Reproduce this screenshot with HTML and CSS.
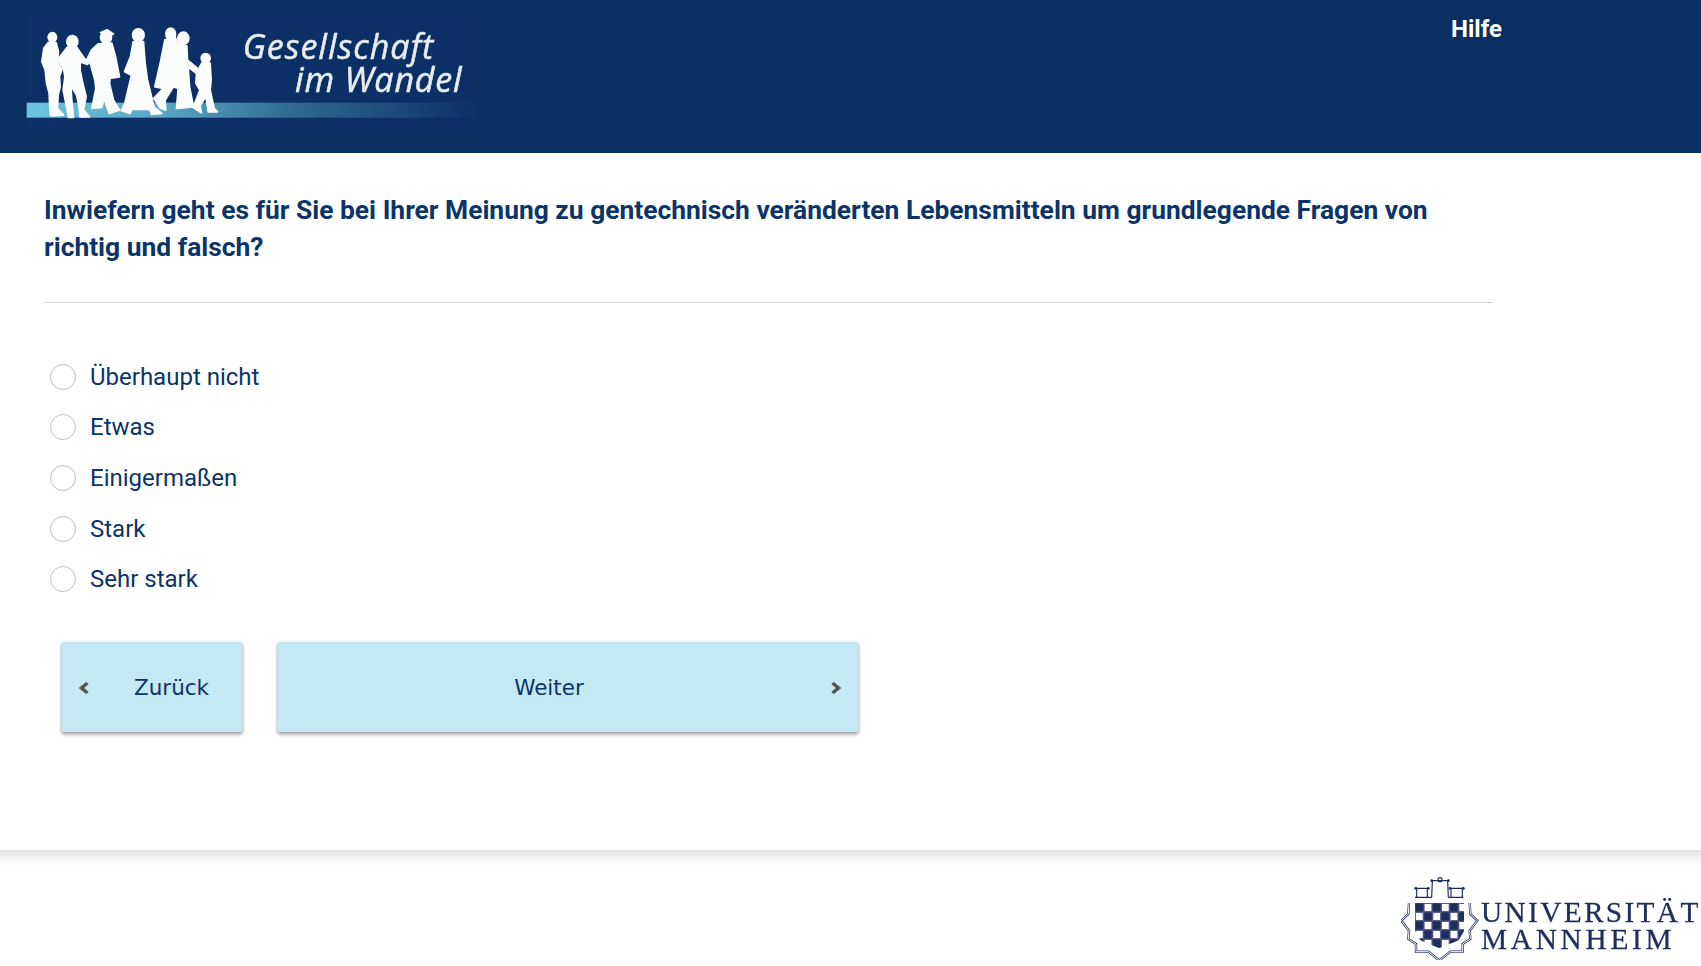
FILE: index.html
```html
<!DOCTYPE html>
<html lang="de">
<head>
    <meta charset="UTF-8">
    <meta name="viewport" content="width=device-width, initial-scale=1.0">
    <title>Gesellschaft im Wandel</title>
    <link rel="stylesheet" href="styles.css">
</head>
<body>

    <header class="header">
        <svg class="logo" viewBox="78 39 1350 360" role="img" aria-label="Gesellschaft im Wandel">
            <defs>
                <linearGradient id="bar" x1="0" x2="1" y1="0" y2="0">
                    <stop offset="0" stop-color="#6cc3df"/>
                    <stop offset="0.3" stop-color="#5aa6c4"/>
                    <stop offset="0.6" stop-color="#2f6890"/>
                    <stop offset="1" stop-color="#0c3166"/>
                </linearGradient>
            </defs>
            <rect x="78" y="39" width="1350" height="360" fill="#0c3066"/>
            <rect x="80" y="308" width="1350" height="45" fill="url(#bar)"/>
            <g class="people" transform="translate(90 60)">
                <!-- man -->
                <ellipse cx="67" cy="52" rx="12" ry="14"/>
                <path d="M55 68 L78 68 L85 95 L82 125 L95 150 L88 170 L90 200 L84 225 L82 265 L100 285 L62 287 L60 265 L58 220 L50 190 L46 150 L36 125 L42 85 Z"/>
                <!-- woman -->
                <ellipse cx="127" cy="65" rx="16" ry="18"/>
                <path d="M112 82 L140 82 L152 100 L165 118 L180 125 L172 133 L150 125 L150 150 L158 190 L168 230 L160 270 L178 290 L150 290 L148 262 L140 225 L122 195 L125 240 L130 292 L116 292 L108 250 L100 210 L105 170 L102 150 L84 118 Z"/>
                <!-- man with cap -->
                <ellipse cx="228" cy="52" rx="16" ry="17"/>
                <path d="M212 38 L232 30 L250 42 L235 46 Z"/>
                <path d="M205 72 L245 70 L255 105 L268 170 L240 175 L238 190 L250 240 L268 270 L238 280 L222 235 L215 262 L186 265 L198 205 L195 180 L180 125 L168 125 L185 90 Z"/>
                <!-- woman in long dress -->
                <ellipse cx="325" cy="45" rx="17" ry="18"/>
                <path d="M310 65 L340 65 L345 130 L352 180 L372 262 L395 280 L365 283 L360 268 L305 268 L300 280 L274 272 L285 250 L305 165 L284 155 L302 110 Z"/>
                <!-- couple -->
                <ellipse cx="422" cy="42" rx="14" ry="17"/>
                <ellipse cx="460" cy="55" rx="16" ry="18"/>
                <path d="M405 60 L435 52 L445 72 L470 78 L472 120 L508 150 L500 160 L474 140 L478 200 L490 260 L440 265 L445 205 L430 200 L405 240 L407 270 L392 265 L372 235 L400 205 L375 200 L392 125 Z"/>
                <!-- child -->
                <ellipse cx="527" cy="115" rx="13" ry="14"/>
                <path d="M515 130 L540 130 L543 180 L540 210 L552 265 L562 275 L535 275 L528 228 L510 258 L514 278 L490 262 L510 210 L498 190 L500 160 Z"/>
            </g>
            <text class="logo-text" x="728" y="177" textLength="572" lengthAdjust="spacing">Gesellschaft</text>
            <text class="logo-text" x="885" y="277" textLength="500" lengthAdjust="spacing">im Wandel</text>
        </svg>
        <a class="help" href="#">Hilfe</a>
    </header>

    <main class="content">
        <h1 class="question">Inwiefern geht es für Sie bei Ihrer Meinung zu gentechnisch veränderten Lebensmitteln um grundlegende Fragen von richtig und falsch?</h1>
        <hr class="divider">

        <form class="answers">
            <label class="answer"><input type="radio" name="a"> Überhaupt nicht</label>
            <label class="answer"><input type="radio" name="a"> Etwas</label>
            <label class="answer"><input type="radio" name="a"> Einigermaßen</label>
            <label class="answer"><input type="radio" name="a"> Stark</label>
            <label class="answer"><input type="radio" name="a"> Sehr stark</label>
        </form>

        <div class="nav-buttons">
            <button class="nav-btn back" type="button">
                <svg class="chevron" viewBox="0 0 10 14"><path d="M8.5 2 L2.5 7 L8.5 12"/></svg>
                <span class="nav-label">Zurück</span>
            </button>
            <button class="nav-btn next" type="button">
                <span class="nav-label">Weiter</span>
                <svg class="chevron" viewBox="0 0 10 14"><path d="M1.5 2 L7.5 7 L1.5 12"/></svg>
            </button>
        </div>
    </main>

    <footer class="footer">
        <svg class="uni-logo" viewBox="63 50 900 250" role="img" aria-label="Universität Mannheim">
            <defs>
                <clipPath id="shield">
                    <path d="M105 128 L252 128 L252 212 L236 240 L178 264 L121 240 L105 212 Z"/>
                </clipPath>
                <pattern id="check" x="105" y="128" width="52" height="54" patternUnits="userSpaceOnUse">
                    <rect width="52" height="54" fill="#57628a"/>
                    <rect x="1" y="1" width="24" height="25" fill="#1e2d5c"/>
                    <rect x="27" y="28" width="24" height="25" fill="#1e2d5c"/>
                    <rect x="29" y="3" width="20" height="21" fill="#fff"/>
                    <rect x="3" y="30" width="20" height="21" fill="#fff"/>
                </pattern>
            </defs>
            <rect x="105" y="128" width="147" height="137" fill="url(#check)" clip-path="url(#shield)"/>
            <path class="crest-line" d="M87 128 L85 161 L64 181 L87 211 L85 236 L108 251 L108 274 L145 274 L178 300 L211 274 L248 274 L248 251 L271 236 L269 211 L292 181 L271 161 L269 128"/>
            <path class="crest-inner" d="M87 128 L85 161 L64 181 L87 211 L85 236 L108 251 L108 274 L145 274 L178 300 L211 274 L248 274 L248 251 L271 236 L269 211 L292 181 L271 161 L269 128"/>
            <path class="crown" d="M155 61 H205 M157 63 L155 111 M203 63 L205 111 M107 84 H145 M110 84 V111 M142 84 V111 M105 111 H155 M210 84 H250 M213 84 V111 M247 84 V111 M205 111 H250"/>
            <g class="crown-dots">
                <circle cx="155" cy="61" r="4"/>
                <circle cx="205" cy="61" r="4"/>
                <circle cx="107" cy="84" r="4"/>
                <circle cx="145" cy="84" r="4"/>
                <circle cx="210" cy="84" r="4"/>
                <circle cx="250" cy="84" r="4"/>
            </g>
            <circle class="crown" cx="180" cy="58" r="6"/>
            <text class="uni-text" x="303" y="186" textLength="652" lengthAdjust="spacing">UNIVERSITÄT</text>
            <text class="uni-text" x="303" y="266" textLength="572" lengthAdjust="spacing">MANNHEIM</text>
        </svg>
    </footer>

</body>
</html>
```

FILE: styles.css
```css
html, body {
    height: 100%;
}

body {
    font-family: Roboto, Arial, sans-serif;
    display: flex;
    flex-direction: column;
    margin: 0;
    background-color: #fff;
    color: #0b3468;
    overflow: hidden;
}

.header {
    display: flex;
    align-items: flex-start;
    height: 153px;
    padding: 13px 0 0 26px;
    box-sizing: border-box;
    background-color: #093060;
}

.logo {
    width: 450px;
    height: 120px;
    flex: none;
    filter: blur(0.4px);
}

.people {
    fill: #fbfdfd;
    stroke: #fbfdfd;
    stroke-width: 6;
    stroke-linejoin: round;
}

.logo-text {
    font-family: "Open Sans", sans-serif;
    font-style: italic;
    font-size: 102px;
    fill: #e8edf2;
    stroke: #e8edf2;
    stroke-width: 1.5;
}

.help {
    margin: 2px 0 0 975px;
    color: #fff;
    font-size: 24px;
    font-weight: 700;
    line-height: 28px;
    text-decoration: none;
}

.content {
    padding: 0 44px;
}

.question {
    width: 1449px;
    margin: 39px 0 0;
    font-size: 26.4px;
    font-weight: 700;
    line-height: 37px;
}

.divider {
    width: 1449px;
    height: 1px;
    margin: 35.5px 0 0;
    border: none;
    background-color: #d4d4d4;
}

.answers {
    display: flex;
    flex-direction: column;
    gap: 16.7px;
    margin-top: 57px;
    padding-left: 6px;
}

.answer {
    display: flex;
    align-items: center;
    gap: 14px;
    height: 34px;
    font-size: 24px;
}

.answer input {
    appearance: none;
    width: 26px;
    height: 26px;
    margin: 0;
    border: 1.5px solid #c0c0c0;
    border-radius: 50%;
    background-color: #fff;
}

.nav-buttons {
    display: flex;
    gap: 36px;
    margin: 45.5px 0 0 18px;
}

.nav-btn {
    display: flex;
    align-items: center;
    height: 90px;
    padding: 2px 17px 0;
    border: none;
    background-color: #c5e8f5;
    box-shadow: 0 2px 4px rgba(0, 0, 0, 0.45);
    color: #0b3468;
    font-family: "DejaVu Sans", Verdana, sans-serif;
    font-size: 21.5px;
}

.back {
    width: 180px;
}

.next {
    width: 580px;
}

.nav-label {
    flex: 1;
    text-align: center;
}

.back .nav-label {
    padding-left: 29px;
}

.next .nav-label {
    padding-right: 28px;
}

.chevron {
    width: 10px;
    height: 14px;
    flex: none;
}

.chevron path {
    fill: none;
    stroke: #555;
    stroke-width: 3.5;
}

.footer {
    display: flex;
    justify-content: flex-end;
    margin-top: auto;
    height: 116px;
    padding-top: 27px;
    box-sizing: border-box;
    background: linear-gradient(#e4e4e4, #fff 16px);
}

.uni-logo {
    width: 300px;
    height: 83.33px;
    filter: blur(0.3px);
}

.crest-line {
    fill: none;
    stroke: #1e2d5c;
    stroke-width: 7;
}

.crest-inner {
    fill: none;
    stroke: #fff;
    stroke-width: 3;
}

.crown {
    fill: none;
    stroke: #1e2d5c;
    stroke-width: 3.5;
}

.crown-dots {
    fill: #1e2d5c;
}

.uni-text {
    font-family: "Liberation Serif", serif;
    font-size: 88px;
    fill: #1e2d5c;
    stroke: #1e2d5c;
    stroke-width: 0.8;
}
```
